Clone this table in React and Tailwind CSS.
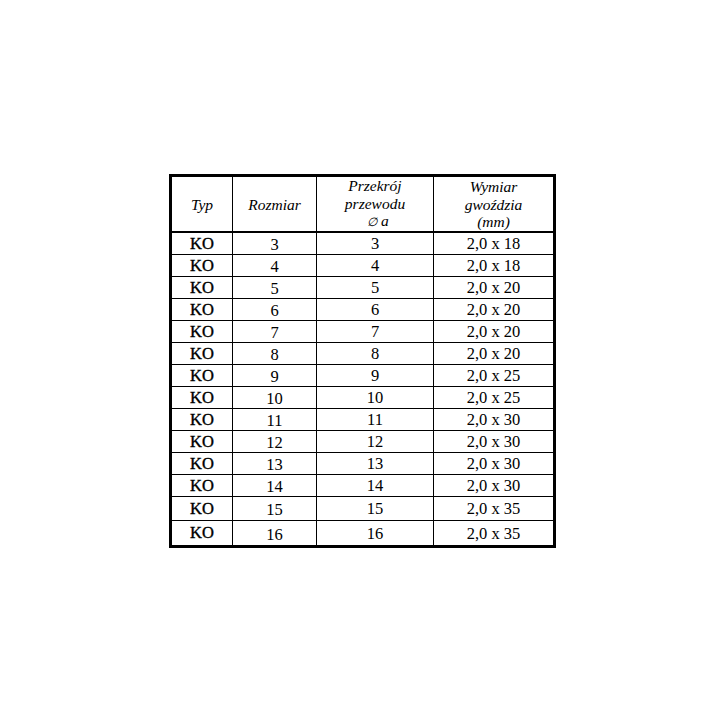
import React from 'react';

const rows = [
  ['3', '2,0 x 18'],
  ['4', '2,0 x 18'],
  ['5', '2,0 x 20'],
  ['6', '2,0 x 20'],
  ['7', '2,0 x 20'],
  ['8', '2,0 x 20'],
  ['9', '2,0 x 25'],
  ['10', '2,0 x 25'],
  ['11', '2,0 x 30'],
  ['12', '2,0 x 30'],
  ['13', '2,0 x 30'],
  ['14', '2,0 x 30'],
  ['15', '2,0 x 35'],
  ['16', '2,0 x 35'],
];

const cols = 'grid grid-cols-[61px_84px_117px_119px]';

const App = () => {
  return (
    <div
      className="w-[724px] h-[724px] bg-white pt-[174px] pl-[169px] text-black"
      style={{ fontFamily: '"Liberation Serif", "Times New Roman", serif' }}
    >
      <div className="w-[387px] border-[3px] border-black">
        {/* Header */}
        <div className={`${cols} h-[56px] border-b-2 border-black italic text-[15.5px] leading-[17.5px] text-center`}>
          <div className="border-r border-black flex items-center justify-center">Typ</div>
          <div className="border-r border-black flex items-center justify-center">Rozmiar</div>
          <div className="border-r border-black flex flex-col items-center justify-center">
            <span>Przekrój</span>
            <span>przewodu</span>
            <span className="pl-[6px]">
              <span className="text-[12px]">∅</span> a
            </span>
          </div>
          <div className="flex flex-col items-center justify-center">
            <span>Wymiar</span>
            <span>gwoździa</span>
            <span>(mm)</span>
          </div>
        </div>

        {/* Body */}
        {rows.map(([size, nail], i) => (
          <div
            key={size}
            className={`${cols} text-[16.5px] leading-none text-center ${
              i < 12 ? 'h-[22px]' : 'h-[24px]'
            } ${i < rows.length - 1 ? 'border-b border-black' : ''}`}
          >
            <div className="border-r border-black flex items-center justify-center pt-[1px] [-webkit-text-stroke:0.4px_black]">KO</div>
            <div className="border-r border-black flex items-center justify-center pt-[4px]">{size}</div>
            <div className="border-r border-black flex items-center justify-center pt-[2px]">{size}</div>
            <div className="flex items-center justify-center pt-[2px]">{nail}</div>
          </div>
        ))}
      </div>
    </div>
  );
};

export default App;
